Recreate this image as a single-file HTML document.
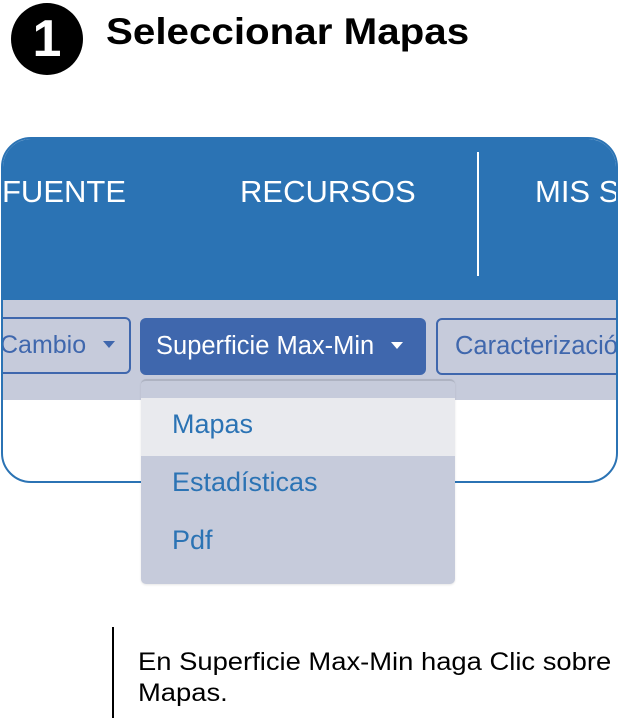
<!DOCTYPE html>
<html><head><meta charset="utf-8"><style>
*{margin:0;padding:0;box-sizing:border-box}
body{width:619px;height:718px;background:#fff;position:relative;overflow:hidden;font-family:"Liberation Sans",Arial,sans-serif}
.a{position:absolute}
.car{display:inline-block;width:0;height:0;border-left:6px solid transparent;border-right:6px solid transparent;border-top:7px solid currentColor;vertical-align:5px}
</style></head><body>
<div class="a" style="left:11px;top:3px;width:72px;height:72px;border-radius:50%;background:#000;color:#fff;font-weight:bold;font-size:52px;line-height:72px;text-align:center">1</div>
<div class="a" style="left:106px;top:11px;font-size:37px;font-weight:bold;color:#000;white-space:nowrap;transform:scaleX(1.09);transform-origin:0 0">Seleccionar Mapas</div>

<div class="a" style="left:1px;top:137px;width:617px;height:346px;border:2px solid #2b73b4;border-radius:30px;overflow:hidden;background:#fff">
  <div class="a" style="left:0;top:0;width:100%;height:161px;background:#2b73b4"></div>
  <div class="a" style="left:0;top:161px;width:100%;height:100px;background:#c6cbdb"></div>
  <div class="a" style="left:-1px;top:35px;color:#fff;font-size:31px;white-space:nowrap">FUENTE</div>
  <div class="a" style="left:237px;top:35px;color:#fff;font-size:31px;white-space:nowrap">RECURSOS</div>
  <div class="a" style="left:532px;top:35px;color:#fff;font-size:31px;white-space:nowrap">MIS SERVICIOS</div>
  <div class="a" style="left:474px;top:13px;width:2px;height:124px;background:#fff"></div>
  <div class="a" style="left:-25px;top:178px;width:153px;height:57px;border:2px solid #3f67ad;border-radius:6px;color:#3f67ad;font-size:25px;line-height:53px;padding-left:20px;white-space:nowrap">Cambio <span class="car" style="margin-left:10px"></span></div>
  <div class="a" style="left:137px;top:179px;width:286px;height:57px;background:#3f67ad;border-radius:6px;color:#fff;font-size:25.5px;line-height:57px;padding-left:16px;white-space:nowrap">Superficie Max-Min <span class="car" style="margin-left:10px"></span></div>
  <div class="a" style="left:433px;top:179px;width:250px;height:57px;border:2px solid #3f67ad;border-radius:6px;color:#3f67ad;font-size:25.5px;line-height:53px;padding-left:17px;white-space:nowrap">Caracterización</div>
</div>

<div class="a" style="left:141px;top:379px;width:314px;height:205px;background:#c6cbdb;border-radius:5px;border-top:2px solid #aeb3c2;box-shadow:0 1px 2px rgba(0,0,0,.1)">
  <div class="a" style="left:0;top:17px;width:100%;height:58px;background:#e9eaee"></div>
  <div class="a" style="left:31px;top:28px;color:#2b73b4;font-size:27px">Mapas</div>
  <div class="a" style="left:31px;top:86px;color:#2b73b4;font-size:27px">Estadísticas</div>
  <div class="a" style="left:31px;top:144px;color:#2b73b4;font-size:27px">Pdf</div>
</div>

<div class="a" style="left:112px;top:627px;width:2px;height:91px;background:#000"></div>
<div class="a" style="left:138px;top:647px;font-size:25px;line-height:31px;color:#000;white-space:nowrap;transform:scaleX(1.095);transform-origin:0 0">En Superficie Max-Min haga Clic sobre<br>Mapas.</div>
</body></html>
